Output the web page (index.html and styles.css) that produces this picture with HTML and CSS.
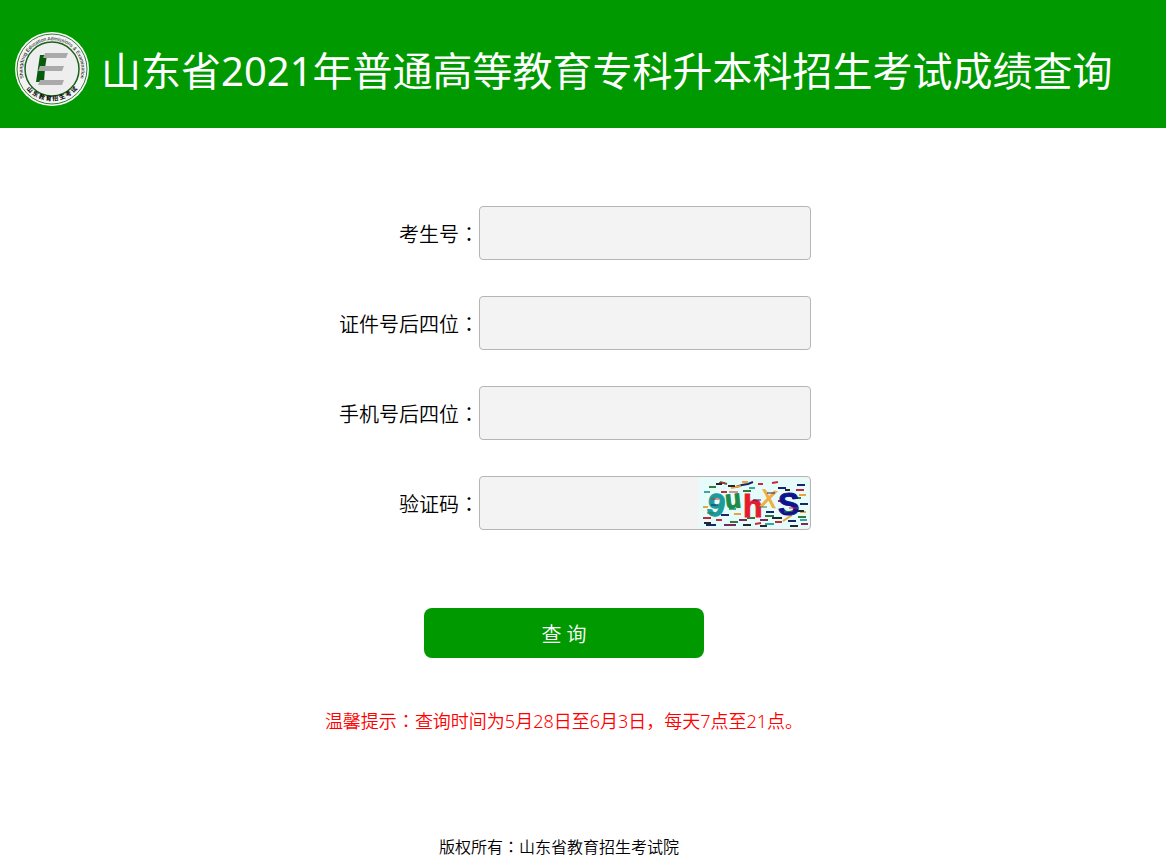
FILE: index.html
```html
<!DOCTYPE html>
<html lang="zh-CN">
<head>
  <meta charset="UTF-8">
  <meta name="viewport" content="width=device-width, initial-scale=1.0">
  <title>山东省2021年普通高等教育专科升本科招生考试成绩查询</title>
  <link rel="stylesheet" href="styles.css">
</head>
<body>
  <header class="header">
    <svg class="logo" viewBox="0 0 76 76" role="img" aria-label="山东教育招生考试">
      <defs>
        <path id="arcTop" d="M10 48A29.500 29.500 0 1 1 66 48"/>
        <path id="arcBottom" d="M5 42A33.500 33.500 0 0 0 71 42"/>
      </defs>
      <circle cx="38" cy="38" r="37" fill="#fff"/>
      <circle cx="38" cy="38" r="35" fill="#f4f4f4" stroke="#2f7a2f" stroke-width="1"/>
      <circle cx="38" cy="38" r="27" fill="#eee" stroke="#176317" stroke-width="1.500"/>
      <text class="logo-en"><textPath href="#arcTop" startOffset="50%">Shangdong Education Admissions &amp; Examination</textPath></text>
      <text class="logo-cn"><textPath href="#arcBottom" startOffset="50%">山 东 教 育 招 生 考 试</textPath></text>
      <path d="M26 24h7l-2 13-1 14h-8l2-14z" fill="#075c0b"/>
      <path d="M31 22h23l-2 5H29zM26 35h24l-2 5H24zM26 49h24l-2 5H24z" fill="#aaa"/>
    </svg>
    <h1>山东省2021年普通高等教育专科升本科招生考试成绩查询</h1>
  </header>

  <main class="main">
    <form class="query-form">
      <div class="row">
        <label for="ksh">考生号<span class="colon" lang="ja">：</span></label>
        <input type="text" id="ksh" name="ksh">
      </div>
      <div class="row">
        <label for="zjh">证件号后四位<span class="colon" lang="ja">：</span></label>
        <input type="text" id="zjh" name="zjh" maxlength="4">
      </div>
      <div class="row">
        <label for="sjh">手机号后四位<span class="colon" lang="ja">：</span></label>
        <input type="text" id="sjh" name="sjh" maxlength="4">
      </div>
      <div class="row">
        <label for="yzm">验证码<span class="colon" lang="ja">：</span></label>
        <input type="text" id="yzm" name="yzm" autocomplete="off">
        <svg class="captcha" viewBox="0 0 110 50" role="img" aria-label="验证码">
          <rect width="110" height="50" fill="#e6fcfa"/>
          <g fill="none" stroke-width="2">
            <path stroke="#2f7a3c" d="M10 9h7M21 4l7 2M44 13h8M93 20h9M48 40h8M31 44h8M66 38h9M99 39h8"/>
            <path stroke="#c8283c" d="M20 5h6M22 14h6M73 5l6-1M59 6h5M97 12h8M4 40h8M17 42h6M56 46l6-1M76 44h7"/>
            <path stroke="#1b2369" d="M37 9l6-2 6-1 5-2M22 37h8M98 7h8M101 26h8M67 34h8M89 43h8M7 47h10M79 10h8"/>
            <path stroke="#e9a43a" d="M32 10l10-2M43 4h6M100 17h7M84 43l9-6M4 29h5M35 36h7M101 34h6"/>
            <path stroke="#792a57" d="M25 47h12M40 42h8M79 23h5M61 42h8M102 46h7"/>
            <path stroke="#22292b" d="M29 8h7M17 6h6M5 45h7M44 47h8M73 40h10M91 48h8M97 33h8M86 12h5M61 48h7"/>
            <path stroke="#35a9a0" d="M5 14h6M50 10h6M101 42h7M66 46h9M30 31h7"/>
          </g>
          <g class="captcha-text">
            <text x="8" y="38" fill="#1d9a9a" stroke="#1d9a9a" transform="rotate(12 17 29)">9</text>
            <text class="captcha-u" x="26" y="30" fill="#208a45" stroke="#208a45" transform="rotate(-6 34 21)">u</text>
            <text x="44" y="39" fill="#e51c30" stroke="#e51c30">h</text>
            <text class="captcha-x" x="62" y="29" fill="#f2ad3d" stroke="#f2ad3d" transform="rotate(8 70 20)">X</text>
            <text x="79" y="37" fill="#10138c" stroke="#10138c">S</text>
          </g>
          <g fill="none" stroke-width="1">
            <path stroke="#c8283c" d="M12 21h8M30 14h9M90 30h9"/>
            <path stroke="#1b2369" d="M12 27h7M54 22h8M68 15h8"/>
            <path stroke="#2f7a3c" d="M8 35h7M60 29h8M85 34l9-1"/>
          </g>
        </svg>
      </div>
      <button type="submit" class="btn">查 询</button>
    </form>
    <p class="tip">温馨提示<span class="colon" lang="ja">：</span>查询时间为5月28日至6月3日，每天7点至21点。</p>
  </main>

  <footer class="footer">版权所有<span class="colon" lang="ja">：</span>山东省教育招生考试院</footer>
</body>
</html>
```
FILE: styles.css
```css
* {
  box-sizing: border-box;
}
body {
  margin: 0;
  background: #fff;
  color: #000;
  font-family: "Noto Sans", "Noto Sans CJK SC", sans-serif;
  font-weight: 350;
}
.header {
  display: flex;
  align-items: center;
  gap: 11px;
  min-height: 128px;
  padding: 10px 14px 0;
  background: #090;
  color: #fff;
}
.header h1 {
  margin: 0;
  padding-top: 4px;
  font-size: 40px;
  font-weight: 400;
  line-height: 60px;
}
.logo {
  width: 76px;
  height: 76px;
  flex: none;
}
.logo-en {
  font: 5px "Liberation Sans", sans-serif;
  text-anchor: middle;
}
.logo-cn {
  font: bold 6px "Noto Sans CJK SC", sans-serif;
  text-anchor: middle;
}
.main {
  padding: 78px 38px 0 0;
}
.query-form {
  display: flex;
  flex-direction: column;
  gap: 36px;
  max-width: 494px;
  margin: 0 auto;
}
.row {
  position: relative;
  display: flex;
  align-items: center;
}
.row label {
  flex: 1;
  font-size: 20px;
  text-align: right;
}
.row input {
  width: 332px;
  height: 54px;
  padding: 0 12px;
  border: 1px solid #b5b5b5;
  border-radius: 4px;
  background: #f3f3f3;
  font-size: 20px;
}
#yzm {
  padding-right: 120px;
}
/* sits over the right end of the code input */
.captcha {
  position: absolute;
  top: 2px;
  right: 2px;
  width: 110px;
  height: 50px;
}
.captcha-text {
  font: bold 32px "Liberation Sans", sans-serif;
}
.captcha-text .captcha-u {
  font-size: 26px;
}
.captcha-text .captcha-x {
  font-size: 24px;
  font-weight: 400;
}
.colon {
  font-family: "Noto Sans CJK JP", sans-serif;
}
.btn {
  align-self: center;
  width: 280px;
  height: 50px;
  margin-top: 42px;
  border: 0;
  border-radius: 8px;
  background: #090;
  color: #fff;
  font: inherit;
  font-size: 20px;
  cursor: pointer;
}
.tip {
  margin: 48px 0 0;
  color: #f00;
  font-size: 18px;
  line-height: 28px;
  text-align: center;
}
.footer {
  padding: 99px 48px 6px 0;
  font-size: 16px;
  line-height: 24px;
  text-align: center;
}
```
